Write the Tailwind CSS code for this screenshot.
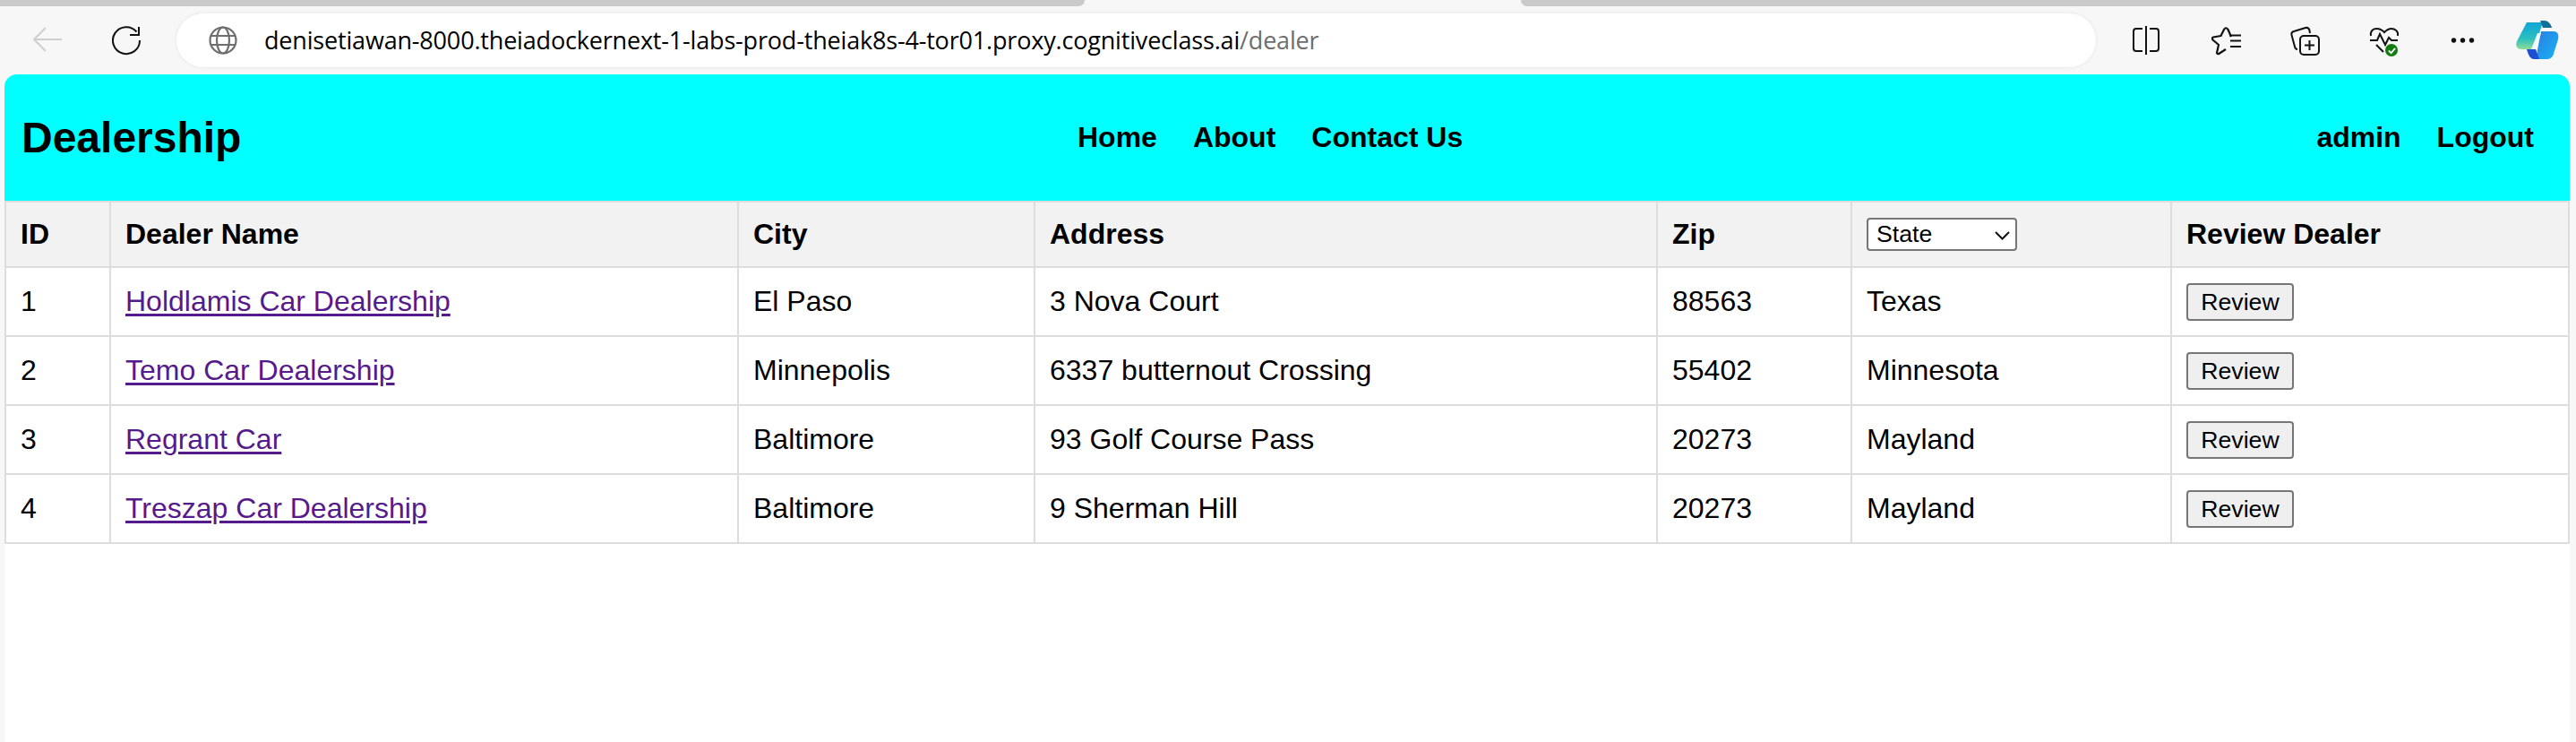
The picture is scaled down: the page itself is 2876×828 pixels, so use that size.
<!doctype html>
<html>
<head>
  <meta charset="UTF-8">
  <script src="https://cdn.jsdelivr.net/npm/@tailwindcss/browser@4"></script>
</head>
<body class="h-[828px] w-[2876px] overflow-hidden bg-[#f7f7f7] font-['Liberation_Sans',Arial,sans-serif] text-black">
  <!-- tab strip -->
  <div class="flex h-[7px] justify-between">
    <div class="h-full w-[1211px] rounded-br-[10px] bg-[#cacaca]"></div>
    <div class="h-full w-[1178px] rounded-bl-[10px] bg-[#cacaca]"></div>
  </div>

  <!-- browser toolbar -->
  <div class="flex h-[76px] items-start">
    <div class="ml-[37px] mt-[21px] flex items-center">
      <svg class="h-[32px] w-[32px]" viewBox="0 0 32 32" fill="none" stroke="#cfcfcf" stroke-width="2"><path d="M1 15h31M14 2 1 15l13 13"/></svg>
      <svg class="ml-[56px] h-[34px] w-[34px]" viewBox="0 0 34 34" fill="none" stroke="#111" stroke-width="2"><path d="M27.500 7.500A15 15 0 1 0 31 17"/><path d="M30 2v9H20"/></svg>
    </div>
    <!-- address bar -->
    <div class="ml-[38px] mt-[8px] flex h-[60px] w-[2143px] items-center rounded-[30px] bg-white pl-[36px] shadow-[0_0_4px_rgba(0,0,0,0.08)]">
      <svg class="h-[32px] w-[32px]" viewBox="0 0 32 32" fill="none" stroke="#6e6e6e" stroke-width="2.200"><circle cx="16" cy="16" r="14.500"/><ellipse cx="16" cy="16" rx="7" ry="14.500"/><path d="M2.500 11h27M2.500 21h27"/></svg>
      <div class="ml-[30px] whitespace-nowrap font-['Open_Sans',sans-serif] text-[27px] tracking-[-0.18px]">denisetiawan-8000.theiadockernext-1-labs-prod-theiak8s-4-tor01.proxy.cognitiveclass.ai<span class="text-[#6e6e6e]">/dealer</span></div>
    </div>
    <!-- toolbar icons -->
    <div class="ml-[40px] mt-[16px] flex items-center">
      <svg class="h-[34px] w-[32px]" viewBox="0 0 32 34" fill="none" stroke="#111" stroke-width="2"><path d="M12 4H5a3 3 0 0 0-3 3v19a3 3 0 0 0 3 3h7M20 4h7a3 3 0 0 1 3 3v19a3 3 0 0 1-3 3h-7M16 1v32"/></svg>
      <svg class="ml-[57px] h-[34px] w-[34px]" viewBox="0 0 34 34" fill="none" stroke="#111" stroke-width="2.200" stroke-linejoin="round"><path d="M22 13l-3.500-8Q16 1.500 14 5l-3.500 7-8.500 1.500Q0 14.500 1.500 16.500L8 22l-2 9Q7 33 9 31.500l7-4.500"/><path d="M20 11.500h13M21 17.500h12M21 24h12"/></svg>
      <svg class="ml-[54px] h-[34px] w-[36px]" viewBox="0 0 36 34" fill="none" stroke="#111" stroke-width="2"><path d="M8 27c-2 0-2.500-1-3-3L1.500 11C1 8.500 2 7.500 4 7L17 3c2.500-.5 4 .5 4.500 3l.5 3"/><rect x="11" y="12" width="21" height="21" rx="4"/><path d="M21.500 17v11M16 22.500h11"/></svg>
      <div class="relative ml-[52px] h-[34px] w-[36px]">
        <svg class="mt-[3px] h-[30px] w-[34px]" viewBox="0 0 34 30" fill="none" stroke="#111" stroke-width="2"><path d="M2 9C1 3 5 1 8.500 1 11 1 14 2 17 5c3-3 5-4 8-4 3 0 8 2 7 8"/><path d="M1 14h8l3-7 6 12 4-8 3 3h7M8 19l8 8"/></svg>
        <div class="absolute left-[18px] top-[21px] flex h-[14px] w-[14px] items-center justify-center rounded-full bg-[#107c10]">
          <svg class="h-[9px] w-[9px]" viewBox="0 0 10 10" fill="none" stroke="#fff" stroke-width="2"><path d="M1 5l3 3 5-6"/></svg>
        </div>
      </div>
      <svg class="ml-[55px] h-[8px] w-[27px]" viewBox="0 0 27 8" fill="#111"><circle cx="3.500" cy="4" r="2.700"/><circle cx="13.500" cy="4" r="2.700"/><circle cx="23.500" cy="4" r="2.700"/></svg>
      <svg class="ml-[46px] h-[44px] w-[48px]" viewBox="0 0 48 44">
        <defs>
          <linearGradient id="cop1" x1="0" y1="0" x2="0" y2="1"><stop offset="0" stop-color="#0ea5d8"/><stop offset="0.600" stop-color="#2ac0c0"/><stop offset="1" stop-color="#8fdc96"/></linearGradient>
          <linearGradient id="cop2" x1="0" y1="0" x2="1" y2="1"><stop offset="0" stop-color="#2b7de0"/><stop offset="1" stop-color="#17b4f5"/></linearGradient>
        </defs>
        <path fill="url(#cop1)" d="M12 2h18l-10 30H6C1 32-1 28 1 23z"/>
        <path fill="#0f6f96" d="M27 0h5c4 0 7 4 8 8H30z"/>
        <path fill="url(#cop2)" d="M28 12h14c5 0 6 4 5 9l-5 16c-1 4-4 6-8 6H22z"/>
        <path fill="#1d4fd0" d="M12 32h10l4 11h-6c-4 0-6-4-8-11z"/>
        <path fill="#f4f9fb" d="M24 14h4l-6 18h-5z"/>
      </svg>
    </div>
  </div>

  <!-- page panel -->
  <div class="ml-[5px] h-[745px] w-[2864px] overflow-hidden rounded-t-[14px] bg-white">
    <nav class="flex h-[141px] items-center justify-between bg-[#00ffff] pl-[19px] pr-[40px]">
      <div class="w-[1179px] text-[48px] font-bold">Dealership</div>
      <div class="flex flex-1 gap-[40px] pb-[2px] text-[32px] font-bold">
        <a>Home</a>
        <a>About</a>
        <a>Contact Us</a>
      </div>
      <div class="flex gap-[40px] pb-[2px] text-[32px] font-bold">
        <a>admin</a>
        <a>Logout</a>
      </div>
    </nav>

    <table class="w-[2864px] table-fixed border-collapse text-left text-[32px]">
      <thead>
        <tr class="h-[73px] bg-[#f2f2f2] font-bold">
          <th class="w-[117px] border-2 border-[#dddddd] px-4 pb-[2px]">ID</th>
          <th class="w-[701px] border-2 border-[#dddddd] px-4 pb-[2px]">Dealer Name</th>
          <th class="w-[331px] border-2 border-[#dddddd] px-4 pb-[2px]">City</th>
          <th class="w-[695px] border-2 border-[#dddddd] px-4 pb-[2px]">Address</th>
          <th class="w-[217px] border-2 border-[#dddddd] px-4 pb-[2px]">Zip</th>
          <th class="w-[357px] border-2 border-[#dddddd] px-4">
            <div class="relative h-[37px] w-[168px]">
              <select class="block h-[37px] w-[168px] appearance-none rounded-[4px] border-2 border-[#767676] bg-white pl-[9px] text-[26.67px] leading-[33px] font-normal">
                <option>State</option>
              </select>
              <svg class="absolute left-[143px] top-[15px] h-[10px] w-[17px]" viewBox="0 0 17 10" fill="none" stroke="#111" stroke-width="2"><path d="M1 1l7.500 7.500L16 1"/></svg>
            </div>
          </th>
          <th class="border-2 border-[#dddddd] px-4 pb-[2px]">Review Dealer</th>
        </tr>
      </thead>
      <tbody id="dealers">
        <tr class="h-[77px]">
          <td class="border-2 border-[#dddddd] px-4 pb-[2px]">1</td>
          <td class="border-2 border-[#dddddd] px-4 pb-[2px]"><a class="text-[#551a8b] underline decoration-[3px] underline-offset-[3px]">Holdlamis Car Dealership</a></td>
          <td class="border-2 border-[#dddddd] px-4 pb-[2px]">El Paso</td>
          <td class="border-2 border-[#dddddd] px-4 pb-[2px]">3 Nova Court</td>
          <td class="border-2 border-[#dddddd] px-4 pb-[2px]">88563</td>
          <td class="border-2 border-[#dddddd] px-4 pb-[2px]">Texas</td>
          <td class="border-2 border-[#dddddd] px-4"><button class="block h-[42px] w-[120px] rounded-[4px] border-2 border-[#767676] bg-[#efefef] text-[26.67px] leading-[36px]">Review</button></td>
        </tr>
        <tr class="h-[77px]">
          <td class="border-2 border-[#dddddd] px-4 pb-[2px]">2</td>
          <td class="border-2 border-[#dddddd] px-4 pb-[2px]"><a class="text-[#551a8b] underline decoration-[3px] underline-offset-[3px]">Temo Car Dealership</a></td>
          <td class="border-2 border-[#dddddd] px-4 pb-[2px]">Minnepolis</td>
          <td class="border-2 border-[#dddddd] px-4 pb-[2px]">6337 butternout Crossing</td>
          <td class="border-2 border-[#dddddd] px-4 pb-[2px]">55402</td>
          <td class="border-2 border-[#dddddd] px-4 pb-[2px]">Minnesota</td>
          <td class="border-2 border-[#dddddd] px-4"><button class="block h-[42px] w-[120px] rounded-[4px] border-2 border-[#767676] bg-[#efefef] text-[26.67px] leading-[36px]">Review</button></td>
        </tr>
        <tr class="h-[77px]">
          <td class="border-2 border-[#dddddd] px-4 pb-[2px]">3</td>
          <td class="border-2 border-[#dddddd] px-4 pb-[2px]"><a class="text-[#551a8b] underline decoration-[3px] underline-offset-[3px]">Regrant Car</a></td>
          <td class="border-2 border-[#dddddd] px-4 pb-[2px]">Baltimore</td>
          <td class="border-2 border-[#dddddd] px-4 pb-[2px]">93 Golf Course Pass</td>
          <td class="border-2 border-[#dddddd] px-4 pb-[2px]">20273</td>
          <td class="border-2 border-[#dddddd] px-4 pb-[2px]">Mayland</td>
          <td class="border-2 border-[#dddddd] px-4"><button class="block h-[42px] w-[120px] rounded-[4px] border-2 border-[#767676] bg-[#efefef] text-[26.67px] leading-[36px]">Review</button></td>
        </tr>
        <tr class="h-[77px]">
          <td class="border-2 border-[#dddddd] px-4 pb-[2px]">4</td>
          <td class="border-2 border-[#dddddd] px-4 pb-[2px]"><a class="text-[#551a8b] underline decoration-[3px] underline-offset-[3px]">Treszap Car Dealership</a></td>
          <td class="border-2 border-[#dddddd] px-4 pb-[2px]">Baltimore</td>
          <td class="border-2 border-[#dddddd] px-4 pb-[2px]">9 Sherman Hill</td>
          <td class="border-2 border-[#dddddd] px-4 pb-[2px]">20273</td>
          <td class="border-2 border-[#dddddd] px-4 pb-[2px]">Mayland</td>
          <td class="border-2 border-[#dddddd] px-4"><button class="block h-[42px] w-[120px] rounded-[4px] border-2 border-[#767676] bg-[#efefef] text-[26.67px] leading-[36px]">Review</button></td>
        </tr>
      </tbody>
    </table>
  </div>
</body>
</html>
